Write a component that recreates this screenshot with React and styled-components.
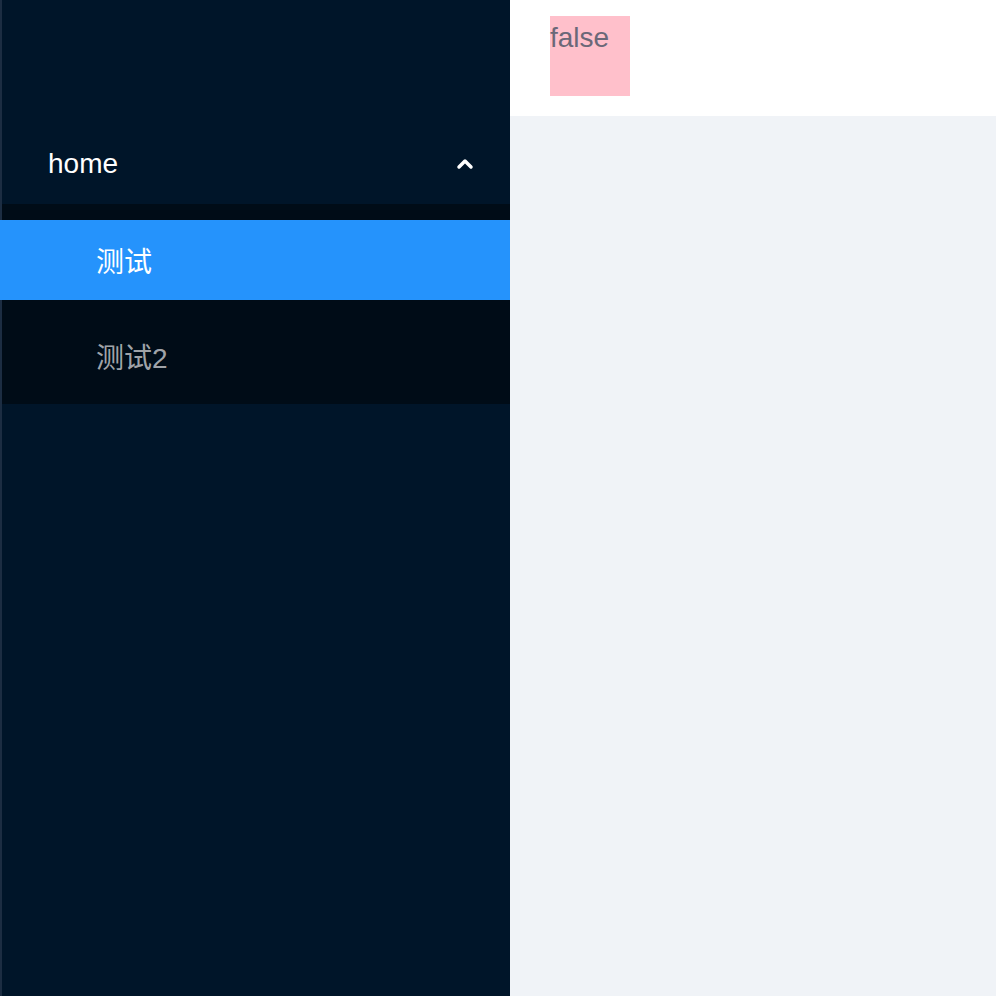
import React from 'react';
import styled, { createGlobalStyle } from 'styled-components';

const GlobalStyle = createGlobalStyle`
    html, body {
        margin: 0;
        padding: 0;
        height: 100%;
    }
    body {
        font-family: "Liberation Sans", "Noto Sans CJK SC", sans-serif;
    }
    #root {
        height: 100%;
    }
`;

const edge = 'inset 2px 0 0 #1c2d42';

const Layout = styled.div`
    display: flex;
    height: 996px;
    width: 100%;
`;

const Sider = styled.aside`
    width: 510px;
    flex: 0 0 510px;
    background: #001529;
    box-shadow: ${edge};
    padding-top: 124px;
`;

const SubMenuTitle = styled.div`
    height: 80px;
    display: flex;
    align-items: center;
    justify-content: space-between;
    padding: 0 36px 0 48px;
    color: #fff;
    font-size: 28px;
`;

const SubMenuList = styled.ul`
    list-style: none;
    margin: 0;
    padding: 16px 0 8px;
    background: #000c17;
    box-shadow: ${edge};
    display: flex;
    flex-direction: column;
    gap: 16px;
`;

const MenuItem = styled.li`
    height: 80px;
    display: flex;
    align-items: center;
    padding-left: 96px;
    font-size: 28px;
    background: ${({ selected }) => (selected ? '#2593fc' : 'transparent')};
    color: ${({ selected }) => (selected ? '#fff' : 'rgba(255, 255, 255, 0.65)')};
`;

const Main = styled.div`
    flex: 1;
    display: flex;
    flex-direction: column;
    background: #f0f3f7;
`;

const Header = styled.header`
    height: 116px;
    background: #fff;
    padding: 16px 40px;
    box-sizing: border-box;
`;

const Flag = styled.div`
    width: 80px;
    height: 80px;
    background: pink;
    color: #6b6878;
    font-size: 28px;
    line-height: 44px;
`;

const Arrow = () => (
    <svg width="18" height="12" viewBox="0 0 18 12">
        <polyline
            points="3,9 9,3 15,9"
            fill="none"
            stroke="#fff"
            strokeWidth="3.5"
            strokeLinecap="round"
            strokeLinejoin="round"
        />
    </svg>
);

const items = [
    { key: 'test', label: '测试', selected: true },
    { key: 'test2', label: '测试2' },
];

export default function App() {
    return (
        <>
            <GlobalStyle />
            <Layout>
                <Sider>
                    <SubMenuTitle>
                        <span>home</span>
                        <Arrow />
                    </SubMenuTitle>
                    <SubMenuList>
                        {items.map(item => (
                            <MenuItem key={item.key} selected={item.selected}>
                                {item.label}
                            </MenuItem>
                        ))}
                    </SubMenuList>
                </Sider>
                <Main>
                    <Header>
                        <Flag>false</Flag>
                    </Header>
                </Main>
            </Layout>
        </>
    );
}
